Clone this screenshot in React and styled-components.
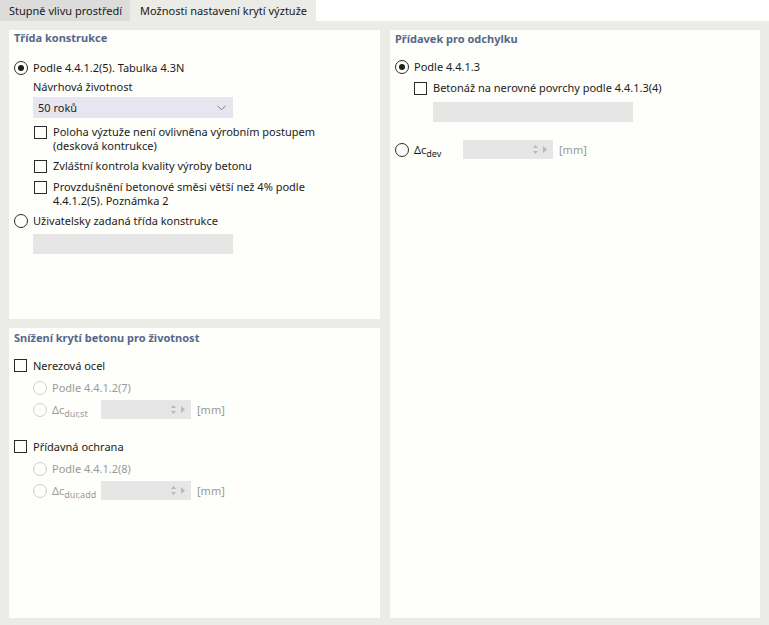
import React from "react";
import styled, { createGlobalStyle } from "styled-components";

const GlobalStyle = createGlobalStyle`
  html, body {
    margin: 0;
    padding: 0;
    background: #ebebe7;
  }
  body {
    font-family: "Noto Sans", "Open Sans", sans-serif;
    font-size: 11px;
    color: #1c1c1c;
  }
`;

const Page = styled.div`
  width: 769px;
  height: 625px;
  display: flex;
  flex-direction: column;
  background: #ebebe7;
`;

const TabBar = styled.div`
  height: 21px;
  display: flex;
  background: #ffffff;
`;

const Tab = styled.div`
  height: 21px;
  line-height: 21px;
  padding-left: ${({ $active }) => ($active ? "10px" : "9px")};
  padding-right: ${({ $active }) => ($active ? "9px" : "8px")};
  background: ${({ $active }) => ($active ? "#ebebe7" : "#dcdcda")};
  color: #1a1a1a;
  white-space: nowrap;
`;

const Body = styled.div`
  flex: 1;
  display: grid;
  grid-template-columns: 371px 370px;
  column-gap: 10px;
  padding: 9px 9px 7px 9px;
  min-height: 0;
`;

const Column = styled.div`
  display: flex;
  flex-direction: column;
  gap: 9px;
  min-height: 0;
`;

const Panel = styled.div`
  flex: 1;
  background: #fefefa;
  padding: ${({ $top }) => $top || 1}px 6px 0 5px;
  display: flex;
  flex-direction: column;
  align-items: flex-start;
`;

const Title = styled.div`
  font-weight: 700;
  color: #57678a;
  line-height: 14px;
`;

const Option = styled.div`
  display: flex;
  align-items: ${({ $top }) => ($top ? "flex-start" : "center")};
  margin-top: ${({ $mt }) => $mt || 0}px;
  margin-left: ${({ $indent }) => $indent || 0}px;
  min-height: ${({ $h }) => $h || 14}px;
  line-height: 14px;
  color: ${({ $disabled }) => ($disabled ? "#9a9a9a" : "#1c1c1c")};
`;

const Radio = styled.span`
  flex: none;
  width: 12px;
  height: 12px;
  border-radius: 50%;
  border: 1px solid ${({ $disabled }) => ($disabled ? "#cfcfcf" : "#2a2a2a")};
  margin-right: 5px;
  display: flex;
  align-items: center;
  justify-content: center;
  &::after {
    content: "";
    width: 6px;
    height: 6px;
    border-radius: 50%;
    background: #1f1f1f;
    display: ${({ $checked }) => ($checked ? "block" : "none")};
  }
`;

const Check = styled.span`
  flex: none;
  width: 11px;
  height: 11px;
  border: 1px solid #2a2a2a;
  margin-right: 6px;
  margin-top: ${({ $top }) => ($top ? "1px" : "0")};
`;

const Label = styled.div`
  margin-top: ${({ $mt }) => $mt || 0}px;
  margin-left: ${({ $indent }) => $indent || 0}px;
  line-height: 14px;
`;

const Select = styled.div`
  margin-top: ${({ $mt }) => $mt || 0}px;
  margin-left: 19px;
  width: 200px;
  height: 21px;
  background: #e7e6f0;
  display: flex;
  align-items: center;
  justify-content: space-between;
  padding: 0 7px 0 5px;
  box-sizing: border-box;
`;

const GrayBox = styled.div`
  margin-top: ${({ $mt }) => $mt || 0}px;
  margin-left: ${({ $indent }) => $indent || 0}px;
  width: 200px;
  height: 20px;
  background: #e6e6e6;
`;

const DeltaLabel = styled.span`
  width: 49px;
  flex: none;
  white-space: nowrap;
  sub {
    font-size: 9px;
    vertical-align: -3px;
    line-height: 0;
  }
`;

const SpinBox = styled.div`
  width: 90px;
  height: 19px;
  background: #e6e6e6;
  display: flex;
  align-items: center;
  justify-content: flex-end;
  gap: 5px;
  padding-right: 6px;
  box-sizing: border-box;
`;

const Unit = styled.span`
  margin-left: 6px;
  color: #999999;
`;

const Chevron = () => (
  <svg width="9" height="6" viewBox="0 0 9 6">
    <path d="M0.5 0.8 L4.5 4.8 L8.5 0.8" fill="none" stroke="#7a7a7a" strokeWidth="1" />
  </svg>
);

const Spinner = () => (
  <>
    <svg width="5" height="11" viewBox="0 0 5 11">
      <path d="M0 4 L2.5 1 L5 4 Z M0 7 L2.5 10 L5 7 Z" fill="#b8b8b8" />
    </svg>
    <svg width="4" height="7" viewBox="0 0 4 7">
      <path d="M0 0 L4 3.5 L0 7 Z" fill="#b8b8b8" />
    </svg>
  </>
);

const DeltaRow = ({ mt, indent, sub, disabled }) => (
  <Option $mt={mt} $indent={indent} $h={20} $disabled={disabled}>
    <Radio $disabled={disabled} />
    <DeltaLabel>
      Δc<sub>{sub}</sub>
    </DeltaLabel>
    <SpinBox>
      <Spinner />
    </SpinBox>
    <Unit>[mm]</Unit>
  </Option>
);

const App = () => {
  return (
    <Page>
      <GlobalStyle />
      <TabBar>
        <Tab>Stupně vlivu prostředí</Tab>
        <Tab $active>Možnosti nastavení krytí výztuže</Tab>
      </TabBar>
      <Body>
        <Column>
          <Panel>
            <Title>Třída konstrukce</Title>
            <Option $mt={16}>
              <Radio $checked />
              Podle 4.4.1.2(5). Tabulka 4.3N
            </Option>
            <Label $mt={5} $indent={19}>
              Návrhová životnost
            </Label>
            <Select $mt={3}>
              <span>50 roků</span>
              <Chevron />
            </Select>
            <Option $mt={7} $indent={20} $top>
              <Check $top />
              <span>
                Poloha výztuže není ovlivněna výrobním postupem
                <br />
                (desková kontrukce)
              </span>
            </Option>
            <Option $mt={6} $indent={20}>
              <Check />
              Zvláštní kontrola kvality výroby betonu
            </Option>
            <Option $mt={7} $indent={20} $top>
              <Check $top />
              <span>
                Provzdušnění betonové směsi větší než 4% podle
                <br />
                4.4.1.2(5). Poznámka 2
              </span>
            </Option>
            <Option $mt={6}>
              <Radio />
              Uživatelsky zadaná třída konstrukce
            </Option>
            <GrayBox $mt={6} $indent={19} />
          </Panel>
          <Panel $top={3}>
            <Title>Snížení krytí betonu pro životnost</Title>
            <Option $mt={14}>
              <Check />
              Nerezová ocel
            </Option>
            <Option $mt={8} $indent={19} $disabled>
              <Radio $disabled />
              Podle 4.4.1.2(7)
            </Option>
            <DeltaRow mt={5} indent={19} sub="dur,st" disabled />
            <Option $mt={20}>
              <Check />
              Přídavná ochrana
            </Option>
            <Option $mt={8} $indent={19} $disabled>
              <Radio $disabled />
              Podle 4.4.1.2(8)
            </Option>
            <DeltaRow mt={5} indent={19} sub="dur,add" disabled />
          </Panel>
        </Column>
        <Column>
          <Panel $top={2}>
            <Title>Přídavek pro odchylku</Title>
            <Option $mt={14}>
              <Radio $checked />
              Podle 4.4.1.3
            </Option>
            <Option $mt={7} $indent={19}>
              <Check />
              Betonáž na nerovné povrchy podle 4.4.1.3(4)
            </Option>
            <GrayBox $mt={7} $indent={38} />
            <Option $mt={18}>
              <Radio />
              <DeltaLabel>
                Δc<sub>dev</sub>
              </DeltaLabel>
              <SpinBox>
                <Spinner />
              </SpinBox>
              <Unit>[mm]</Unit>
            </Option>
          </Panel>
        </Column>
      </Body>
    </Page>
  );
};

export default App;
